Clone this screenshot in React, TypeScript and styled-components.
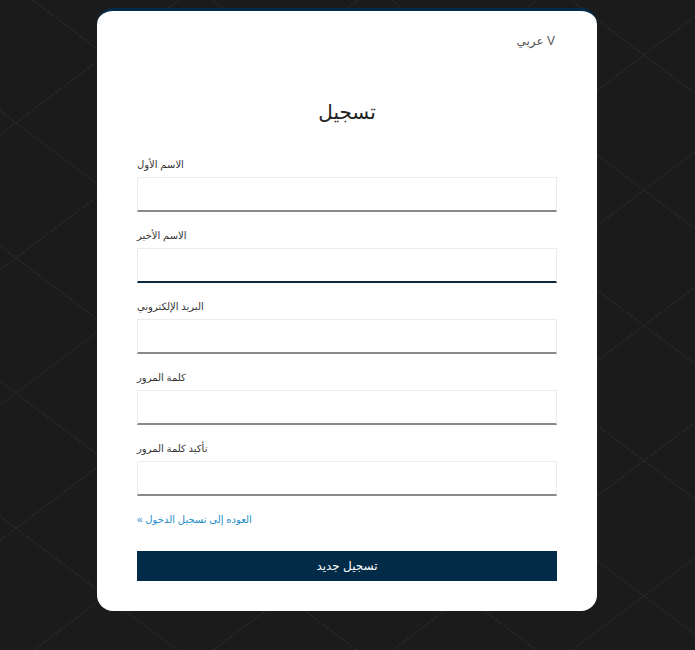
import React from "react";
import styled, { createGlobalStyle } from "styled-components";

const GlobalStyle = createGlobalStyle`
  html,
  body {
    margin: 0;
    padding: 0;
  }

  body {
    background-color: #1b1b1b;
    background-image:
      repeating-linear-gradient(37deg, transparent 0 107px, #252525 107px 108px),
      repeating-linear-gradient(143deg, transparent 0 107px, #252525 107px 108px);
    font-family: "Liberation Sans", "DejaVu Sans", sans-serif;
    min-height: 100vh;
  }
`;

const StyledPage = styled.div`
  display: flex;
  justify-content: center;
  padding: 8px 1px 40px 0;
`;

const StyledCard = styled.div`
  background: #fff;
  border-radius: 16px;
  border-top: 3px solid #062b4a;
  box-sizing: border-box;
  padding: 23px 40px 30px;
  width: 500px;
`;

const StyledLangRow = styled.div`
  display: flex;
  justify-content: flex-end;
  padding-right: 2px;
`;

const StyledLang = styled.span`
  color: #555;
  cursor: pointer;
  font-size: 12px;
  line-height: 14px;
`;

const StyledTitle = styled.h1`
  color: #222;
  font-size: 20px;
  font-weight: normal;
  line-height: 30px;
  margin: 49px 0 31px;
  text-align: center;
`;

const StyledField = styled.div`
  display: flex;
  flex-direction: column;
  margin-bottom: 17px;
`;

const StyledLabel = styled.label`
  color: #333;
  font-size: 10px;
  line-height: 14px;
  margin-bottom: 5px;
`;

const StyledInput = styled.input<{ $active?: boolean }>`
  background: #fff;
  border: 1px solid #ececec;
  border-bottom: 2px solid ${({ $active }) => ($active ? "#0b2840" : "#8a8a8a")};
  box-sizing: border-box;
  height: 35px;
  outline: none;
  padding: 0 10px;
  width: 100%;
`;

const StyledBackLink = styled.a`
  color: #1f8dc6;
  display: block;
  font-size: 10px;
  line-height: 14px;
  margin: 2px 0 24px;
  text-decoration: none;
`;

const StyledButton = styled.button`
  background: #022b47;
  border: none;
  color: #fff;
  cursor: pointer;
  display: block;
  font-family: inherit;
  font-size: 12px;
  height: 30px;
  width: 100%;
`;

const fields = [
  { label: "الاسم الأول", type: "text" },
  { label: "الاسم الأخير", type: "text", active: true },
  { label: "البريد الإلكتروني", type: "email" },
  { label: "كلمة المرور", type: "password" },
  { label: "تأكيد كلمة المرور", type: "password" },
];

export default function App() {
  return (
    <>
      <GlobalStyle />
      <StyledPage>
        <StyledCard>
          <StyledLangRow>
            <StyledLang>عربي V</StyledLang>
          </StyledLangRow>
          <StyledTitle>تسجيل</StyledTitle>
          <form onSubmit={(e) => e.preventDefault()}>
            {fields.map(({ label, type, active }) => (
              <StyledField key={label}>
                <StyledLabel>{label}</StyledLabel>
                <StyledInput type={type} $active={active} />
              </StyledField>
            ))}
            <StyledBackLink href="#">« العوده إلى تسجيل الدخول</StyledBackLink>
            <StyledButton type="submit">تسجيل جديد</StyledButton>
          </form>
        </StyledCard>
      </StyledPage>
    </>
  );
}
